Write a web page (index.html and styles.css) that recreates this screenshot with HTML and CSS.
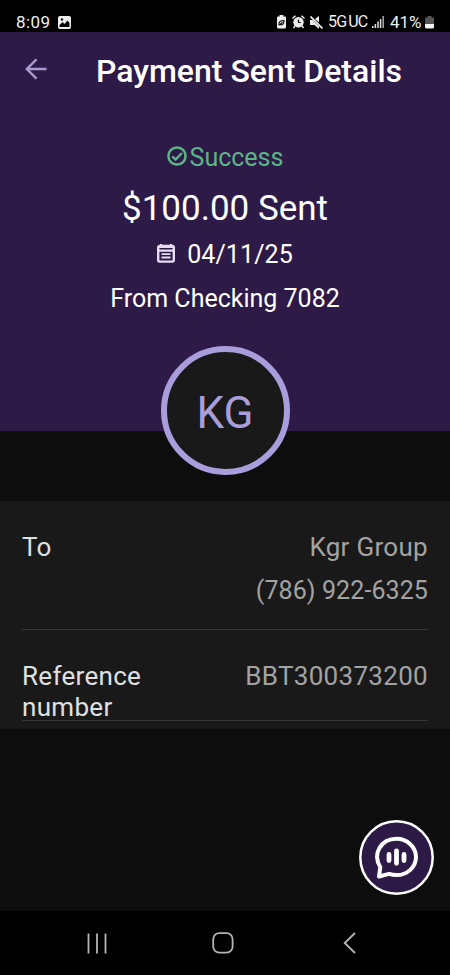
FILE: index.html
```html
<!DOCTYPE html>
<html lang="en">
<head>
<meta charset="utf-8">
<title>Payment Sent Details</title>
<link rel="stylesheet" href="styles.css">
</head>
<body>
<div class="screen">
  <div class="status">
    <span class="clock">8:09</span>
    <svg class="photo" width="13" height="13" viewBox="0 0 13 13"><rect width="13" height="13" rx="2" fill="#eee"/><path d="M1.500 11V9l3-3 2 2 3-3.500 2 2.500v4z" fill="#0a0a0a"/><circle cx="4" cy="3.500" r="1.200" fill="#0a0a0a"/></svg>
    <svg class="saver" width="9" height="14" viewBox="0 0 9 14"><path d="M2.500 0h4v1.500H8q1 0 1 1V12q0 1.500-1.500 1.500h-6Q0 13.500 0 12V2.500q0-1 1-1h1.500z" fill="#eee"/><path d="M2 10.500C1.500 7 3 5.500 7 5.500 7 9 5.500 10.500 3 9.500L5.500 7.200" fill="none" stroke="#111" stroke-width="1.200"/></svg>
    <svg class="alarm" width="13" height="14" viewBox="0 0 13 14"><circle cx="6.500" cy="7.300" r="5.200" fill="#eee"/><path d="M6.500 4.500v3h2.300" fill="none" stroke="#111" stroke-width="1.200"/><path d="M.5 3.500l3-2.700M12.500 3.500l-3-2.700M3 11l-1.500 2M10 11l1.500 2" fill="none" stroke="#eee" stroke-width="1.500"/></svg>
    <svg class="mute" width="13" height="13" viewBox="0 0 13 13"><path d="M0 4h2.500L9 10.500V13L4.500 9H0zM5 3l4-3v6.500z" fill="#eee"/><path d="M.5.5l12 12" stroke="#eee" stroke-width="1.700"/></svg>
    <span class="network">5G<span class="uc">UC</span></span>
    <svg class="signal" width="12" height="12" viewBox="0 0 12 12"><path d="M.8 12v-2M3.400 12V8M6 12V5.500M8.600 12V3" stroke="#ddd" stroke-width="1.500"/><path d="M11.200 12V0" stroke="#aaa" stroke-width="1.500"/></svg>
    <span class="percent">41%</span>
    <svg class="battery" width="9" height="13" viewBox="0 0 9 13"><path d="M2.500 0h4v1.500H8q1 0 1 1V8H0V2.500q0-1 1-1h1.500z" fill="#555"/><path d="M0 8h9v3q0 1.500-1.500 1.500h-6Q0 12.500 0 11z" fill="#f4f4f4"/></svg>
  </div>

  <header class="hero">
    <div class="appbar">
      <svg class="back" width="24" height="24" viewBox="0 0 24 24"><path d="M22.500 12H3M12.500 2.300L2.800 12l9.700 9.700" fill="none" stroke="#a99bd0" stroke-width="2.400"/></svg>
      <h1 class="title">Payment Sent Details</h1>
    </div>
    <div class="success">
      <svg width="20" height="20" viewBox="0 0 20 20"><circle cx="10" cy="10" r="8.600" fill="none" stroke="#5cb487" stroke-width="2.500"/><path d="M5.300 10.300l3.300 3.200 6.300-6.500" fill="none" stroke="#5cb487" stroke-width="2.400"/></svg>
      <span class="success-text">Success</span>
    </div>
    <div class="amount"><span>$100.00 Sent</span></div>
    <div class="date">
      <svg width="18" height="19" viewBox="0 0 18 19"><path d="M4 0v3M14 0v3" stroke="#e6dcf2" stroke-width="2.200"/><rect x="1.200" y="2" width="15.600" height="15.600" rx="1.500" fill="none" stroke="#e6dcf2" stroke-width="2.400"/><path d="M1 3h16M1 6.600h16" stroke="#e6dcf2" stroke-width="2.200"/><path d="M4.500 10.200h9M4.500 13.500h9" stroke="#e6dcf2" stroke-width="1.800"/></svg>
      <span class="date-text">04/11/25</span>
    </div>
    <div class="source"><span>From Checking 7082</span></div>
    <div class="avatar"><span class="initials">KG</span></div>
  </header>

  <main class="details">
    <section class="row recipient">
      <span class="label">To</span>
      <div class="values"><span class="name">Kgr Group</span><span class="phone">(786) 922-6325</span></div>
    </section>
    <section class="row reference">
      <span class="label"><span class="ref-word">Reference</span> <span class="num-word">number</span></span>
      <span class="refno">BBT300373200</span>
    </section>
  </main>

  <div class="chat">
    <svg width="75" height="75" viewBox="0 0 75 75"><circle cx="37.500" cy="37.500" r="36.200" fill="#2e1a47" stroke="#fff" stroke-width="2.500"/><path d="M20 56.500L21.300 47C13 34 22 18.800 37.500 18.800c10.800 0 19.500 8.300 19.500 18.300s-8.700 18-19.500 18c-3 0-5.200-.4-7.300-1.200z" fill="none" stroke="#fff" stroke-width="4" stroke-linejoin="round"/><path d="M30 34.500v6M37.500 30.800v12.500M45 34.500v6" stroke="#fff" stroke-width="4.800" stroke-linecap="round"/></svg>
  </div>

  <nav class="nav">
    <svg width="20" height="21" viewBox="0 0 20 21"><path d="M1.500.5v20M10 .5v20M18.500.5v20" stroke="#b4b4b4" stroke-width="1.800"/></svg>
    <svg width="22" height="22" viewBox="0 0 22 22"><rect x="1.200" y="1.200" width="19.400" height="19.400" rx="6" fill="none" stroke="#b4b4b4" stroke-width="1.800"/></svg>
    <svg width="13" height="22" viewBox="0 0 13 22"><path d="M12 1L1.700 11 12 21" fill="none" stroke="#b4b4b4" stroke-width="1.800"/></svg>
  </nav>
</div>
</body>
</html>
```

FILE: styles.css
```css
* { box-sizing: border-box; }
body { margin: 0; background: #0d0d0d; font-family: Roboto, "Liberation Sans", sans-serif; }
svg { display: block; flex: none; }
.screen { position: relative; width: 450px; height: 975px; display: flex; flex-direction: column; overflow: hidden; background: #0d0d0d; white-space: nowrap; }

.status { height: 32px; flex: none; background: #000; color: #eee; display: flex; align-items: center; padding: 12px 0 0 16px; font-size: 16px; line-height: 20px; }
.clock { width: 42px; font-size: 17px; letter-spacing: 0.4px; }
.saver { margin-left: 206px; }
.alarm { margin-left: 6px; }
.mute { margin-left: 5px; }
.network { margin-left: 5px; width: 44px; font-size: 16px; letter-spacing: -0.8px; }
.uc { margin-left: 2px; }
.percent { margin-left: 6px; width: 34px; font-size: 17px; letter-spacing: -0.1px; }
.battery { margin-left: 1px; }

.hero { height: 399px; flex: none; background: #2e1a47; color: #fff; display: flex; flex-direction: column; align-items: center; }
.hero > * { flex: none; }
.appbar { width: 100%; height: 76px; display: flex; align-items: center; padding-left: 24px; }
.back { margin-top: -2px; }
.title { margin: 2px 0 0 48px; font-size: 32px; font-weight: 500; line-height: 40px; }
.success { margin-top: 34px; height: 32px; display: flex; align-items: center; gap: 3px; color: #5cb487; font-size: 25px; line-height: 32px; }
.success svg { margin-top: -4px; }
.amount { margin-top: 15px; font-size: 35px; line-height: 40px; }
.date { margin-top: 10px; height: 32px; display: flex; align-items: center; gap: 12px; font-size: 25px; line-height: 32px; letter-spacing: 0.1px; }
.date svg { margin-top: -4px; }
.source { margin-top: 12px; font-size: 25px; line-height: 32px; }
.avatar { margin-top: 31px; width: 129px; height: 129px; border: 6px solid #a99edb; border-radius: 50%; background: #191919; display: flex; align-items: center; justify-content: center; color: #a99edb; font-size: 44px; line-height: 50px; }
.initials { margin-top: 4px; }

.details { margin-top: 70px; height: 228px; flex: none; background: #191919; padding: 0 22px; color: #e0e0e0; font-size: 26px; line-height: 31px; letter-spacing: 0.3px; }
.row { display: flex; justify-content: space-between; border-bottom: 1px solid #363636; }
.recipient { height: 129px; padding-top: 31px; }
.reference { height: 91px; padding-top: 31px; }
.label { display: flex; flex-direction: column; align-items: flex-start; }
.values { display: flex; flex-direction: column; align-items: flex-end; gap: 12px; color: #a3a3a3; }
.phone { font-size: 25px; letter-spacing: 0.1px; }
.refno { color: #a3a3a3; }

.chat { position: absolute; left: 359px; top: 820px; }
.nav { margin-top: auto; height: 64px; background: #000; display: flex; align-items: center; padding-left: 87px; }
.nav svg:nth-child(2) { margin-left: 105px; }
.nav svg:nth-child(3) { margin-left: 109px; }
```
